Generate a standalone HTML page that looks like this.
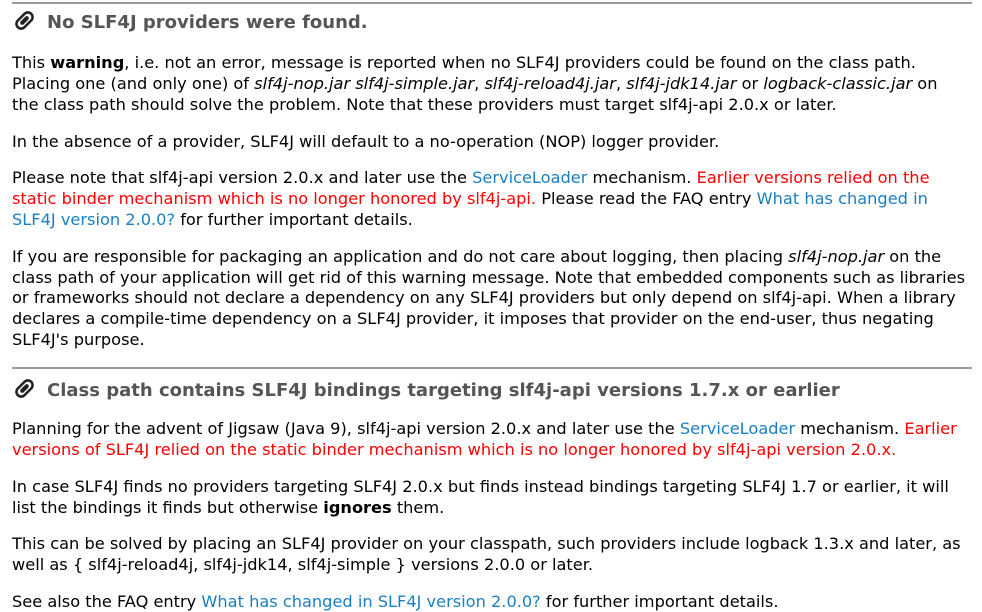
<!DOCTYPE html>
<html><head><meta charset="utf-8"><style>
html,body{margin:0;padding:0;background:#fff;width:982px;height:612px;overflow:hidden}
body{font-family:"DejaVu Sans","Liberation Sans",sans-serif;font-size:16.2px;color:#000;position:relative}
.l{position:absolute;left:12px;white-space:nowrap;line-height:21px}
.hr{position:absolute;left:12px;width:960px;height:2px;background:#999}
.h{position:absolute;left:14px;white-space:nowrap;font-weight:bold;font-size:18px;color:#555;line-height:24px}
.h svg{vertical-align:-3px;margin-right:12px}
.b{color:#1a7fc1}.r{color:#f00}
</style></head><body>
<div class="hr" style="top:2px"></div>
<div class="h" style="top:10px"><svg width="21" height="21" viewBox="0 0 20 20"><g transform="rotate(-45 10 10)"><rect x="1" y="5.5" width="18" height="9" rx="4.5" fill="none" stroke="#222" stroke-width="2.4"/><rect x="5" y="8" width="10" height="4" rx="2" fill="#222"/></g></svg>No SLF4J providers were found.</div>
<div class="l" style="top:52px">This <b>warning</b>, i.e. not an error, message is reported when no SLF4J providers could be found on the class path.</div>
<div class="l" style="top:73px">Placing one (and only one) of <i>slf4j-nop.jar slf4j-simple.jar</i>, <i>slf4j-reload4j.jar</i>, <i>slf4j-jdk14.jar</i> or <i>logback-classic.jar</i> on</div>
<div class="l" style="top:94px">the class path should solve the problem. Note that these providers must target slf4j-api 2.0.x or later.</div>
<div class="l" style="top:131px">In the absence of a provider, SLF4J will default to a no-operation (NOP) logger provider.</div>
<div class="l" style="top:167px">Please note that slf4j-api version 2.0.x and later use the <span class="b">ServiceLoader</span> mechanism. <span class="r">Earlier versions relied on the</span></div>
<div class="l" style="top:188px"><span class="r">static binder mechanism which is no longer honored by slf4j-api.</span> Please read the FAQ entry <span class="b">What has changed in</span></div>
<div class="l" style="top:209px"><span class="b">SLF4J version 2.0.0?</span> for further important details.</div>
<div class="l" style="top:246px">If you are responsible for packaging an application and do not care about logging, then placing <i>slf4j-nop.jar</i> on the</div>
<div class="l" style="top:267px">class path of your application will get rid of this warning message. Note that embedded components such as libraries</div>
<div class="l" style="top:287px">or frameworks should not declare a dependency on any SLF4J providers but only depend on slf4j-api. When a library</div>
<div class="l" style="top:308px">declares a compile-time dependency on a SLF4J provider, it imposes that provider on the end-user, thus negating</div>
<div class="l" style="top:329px">SLF4J's purpose.</div>
<div class="hr" style="top:367px"></div>
<div class="h" style="top:378px"><svg width="21" height="21" viewBox="0 0 20 20"><g transform="rotate(-45 10 10)"><rect x="1" y="5.5" width="18" height="9" rx="4.5" fill="none" stroke="#222" stroke-width="2.4"/><rect x="5" y="8" width="10" height="4" rx="2" fill="#222"/></g></svg>Class path contains SLF4J bindings targeting slf4j-api versions 1.7.x or earlier</div>
<div class="l" style="top:418px">Planning for the advent of Jigsaw (Java 9), slf4j-api version 2.0.x and later use the <span class="b">ServiceLoader</span> mechanism. <span class="r">Earlier</span></div>
<div class="l" style="top:439px"><span class="r">versions of SLF4J relied on the static binder mechanism which is no longer honored by slf4j-api version 2.0.x.</span></div>
<div class="l" style="top:476px">In case SLF4J finds no providers targeting SLF4J 2.0.x but finds instead bindings targeting SLF4J 1.7 or earlier, it will</div>
<div class="l" style="top:497px">list the bindings it finds but otherwise <b>ignores</b> them.</div>
<div class="l" style="top:533px">This can be solved by placing an SLF4J provider on your classpath, such providers include logback 1.3.x and later, as</div>
<div class="l" style="top:554px">well as { slf4j-reload4j, slf4j-jdk14, slf4j-simple } versions 2.0.0 or later.</div>
<div class="l" style="top:591px">See also the FAQ entry <span class="b">What has changed in SLF4J version 2.0.0?</span> for further important details.</div>
</body></html>
